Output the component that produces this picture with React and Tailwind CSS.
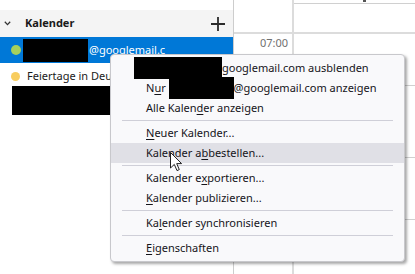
import { useState } from "react";

const font = { fontFamily: '"Noto Sans", "Open Sans", sans-serif' };

function MenuItem({ children, active }) {
  return (
    <div
      className={`flex h-[20px] items-center whitespace-nowrap pl-[35px] text-[11px] text-[#15141a] ${
        active ? "bg-[#e0e0e6]" : ""
      }`}
    >
      {children}
    </div>
  );
}

function Separator() {
  return (
    <div className="flex h-[5px] items-center px-[11px]">
      <div className="h-px w-full bg-[#cfcfd8]" />
    </div>
  );
}

function Key({ children }) {
  return <span className="underline underline-offset-2">{children}</span>;
}

export default function App() {
  const [active] = useState(4);

  return (
    <div className="relative flex h-[274px] w-[415px] overflow-hidden bg-white" style={font}>
      {/* sidebar */}
      <div className="w-[234px] shrink-0 border-r border-[#cdcdcd] bg-white">
        <div className="h-[10px]" />
        <div className="flex h-[27px] items-center bg-[#f4f4f4] pr-[8px]">
          <svg width="7" height="5" viewBox="0 0 7 5" className="ml-[4px] mr-[14px]">
            <path d="M0.8 0.8 L3.5 3.6 L6.2 0.8" fill="none" stroke="#333" strokeWidth="1.3" />
          </svg>
          <span className="text-[11px] font-bold text-[#1a1a1a]">Kalender</span>
          <svg width="14" height="14" viewBox="0 0 14 14" className="ml-auto">
            <path d="M7 0 V14 M0 7 H14" stroke="#2b2b2b" strokeWidth="1.8" />
          </svg>
        </div>
        <div className="flex h-[26px] items-center bg-[#0078d7] pl-[11px]">
          <div className="h-[10px] w-[10px] rounded-full bg-[#a6d05c]" />
          <div className="ml-[2px] mt-[1px] h-[23px] w-[65px] bg-black" />
          <span className="ml-[1px] text-[11px] text-white">@googlemail.c</span>
        </div>
        <div className="flex h-[26px] items-center pl-[11px]">
          <div className="h-[9px] w-[9px] rounded-full bg-[#f8cd5f]" />
          <span className="ml-[7px] whitespace-nowrap text-[11px] text-[#1a1a1a]">
            Feiertage in Deutschland
          </span>
        </div>
        <div className="-mt-[3px] ml-[12px] h-[29px] w-[98px] bg-black" />
      </div>

      {/* calendar */}
      <div className="flex flex-1">
        <div className="w-[60px] shrink-0 border-r-2 border-[#dcdcdc]">
          <div className="h-[34px] border-b-2 border-[#dcdcdc]" />
          <div className="pr-[4px] text-right text-[11px] leading-[18px] text-[#707070]">07:00</div>
        </div>
        <div className="flex-1">
          <div className="relative h-[4px] border-b border-[#d0d0d0]">
            <div className="absolute left-[69px] top-0 h-[2px] w-[3px] bg-[#555]" />
          </div>
          <div className="h-[30px] border-b-2 border-[#dcdcdc]" />
          <div className="h-[52px] border-b border-[#d0d0d0]" />
          <div className="h-[72px] border-b border-[#d0d0d0]" />
          <div className="h-[62px] border-b border-[#d0d0d0]" />
        </div>
      </div>

      {/* context menu */}
      <div className="absolute left-[110px] top-[54px] w-[295px] rounded-[4px] border border-[#c8c8cc] bg-[#f9f9fb] py-[3px] shadow-[2px_2px_3px_rgba(0,0,0,0.35)]">
        <MenuItem>
          <span className="-ml-[12px] inline-block h-[22px] w-[88px] bg-black" />
          googlemail.com ausblenden
        </MenuItem>
        <MenuItem>
          N<Key>u</Key>r&nbsp;
          <span className="inline-block h-[22px] w-[65px] bg-black" />
          @googlemail.com anzeigen
        </MenuItem>
        <MenuItem>
          Alle Kalen<Key>d</Key>er anzeigen
        </MenuItem>
        <Separator />
        <MenuItem>
          <Key>N</Key>euer Kalender...
        </MenuItem>
        <MenuItem active={active === 4}>
          Kalender a<Key>b</Key>bestellen...
        </MenuItem>
        <Separator />
        <MenuItem>
          Kalender e<Key>x</Key>portieren...
        </MenuItem>
        <MenuItem>
          <Key>K</Key>alender publizieren...
        </MenuItem>
        <Separator />
        <MenuItem>
          Ka<Key>l</Key>ender synchronisieren
        </MenuItem>
        <Separator />
        <MenuItem>
          <Key>E</Key>igenschaften
        </MenuItem>
      </div>

      {/* mouse pointer */}
      <svg width="13" height="20" viewBox="0 0 13 20" className="absolute left-[170px] top-[152px]">
        <path
          d="M0.5 0.5 L0.5 16 L4.3 12.4 L7 18.6 L9.3 17.6 L6.7 11.6 L11.6 11.6 Z"
          fill="white"
          stroke="#222"
          strokeWidth="1"
          strokeLinejoin="round"
        />
      </svg>
    </div>
  );
}
